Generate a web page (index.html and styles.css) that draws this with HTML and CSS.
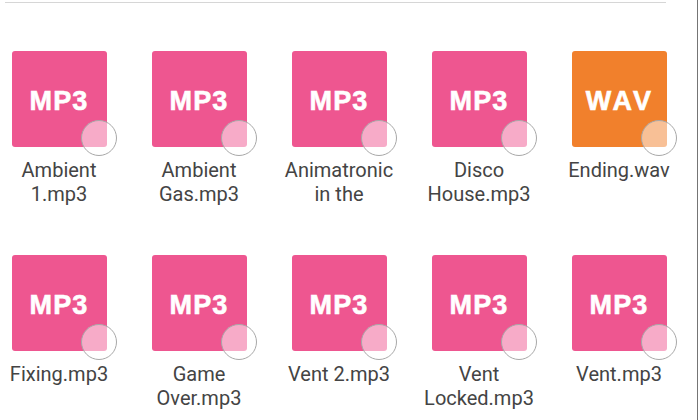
FILE: index.html
```html
<!DOCTYPE html>
<html>
<head>
  <meta charset="UTF-8">
  <title>Files</title>
  <link rel="stylesheet" href="styles.css">
</head>
<body>
  <div class="top-line"></div>
  <div class="file-grid">
    <div class="file"><div class="tile mp3">MP3<span class="check"></span></div><div class="name">Ambient 1.mp3</div></div>
    <div class="file"><div class="tile mp3">MP3<span class="check"></span></div><div class="name">Ambient Gas.mp3</div></div>
    <div class="file"><div class="tile mp3">MP3<span class="check"></span></div><div class="name">Animatronic in the</div></div>
    <div class="file"><div class="tile mp3">MP3<span class="check"></span></div><div class="name">Disco House.mp3</div></div>
    <div class="file"><div class="tile wav">WAV<span class="check"></span></div><div class="name">Ending.wav</div></div>
    <div class="file"><div class="tile mp3">MP3<span class="check"></span></div><div class="name">Fixing.mp3</div></div>
    <div class="file"><div class="tile mp3">MP3<span class="check"></span></div><div class="name">Game Over.mp3</div></div>
    <div class="file"><div class="tile mp3">MP3<span class="check"></span></div><div class="name">Vent 2.mp3</div></div>
    <div class="file"><div class="tile mp3">MP3<span class="check"></span></div><div class="name">Vent Locked.mp3</div></div>
    <div class="file"><div class="tile mp3">MP3<span class="check"></span></div><div class="name">Vent.mp3</div></div>
  </div>
</body>
</html>
```

FILE: styles.css
```css
body {
  margin: 0 1px 0 0;
  height: 420px;
  overflow: hidden;
  background: #fff;
  box-sizing: border-box;
  border-right: 1px solid #757575;
  font-family: Roboto, sans-serif;
}
.top-line {
  height: 1px;
  margin: 2px 31px 0 5px;
  background: #d6d6d6;
}
/* Five columns, tiles are centred in each */
.file-grid {
  display: grid;
  grid-template-columns: repeat(5, 119px);
  column-gap: 21px;
  row-gap: 49px;
  padding-top: 48px;
}
.file {
  display: flex;
  flex-direction: column;
  align-items: center;
}
.tile {
  position: relative;
  width: 95.5px;
  height: 96px;
  box-sizing: border-box;
  padding-top: 4px;
  padding-right: 1px;
  display: flex;
  align-items: center;
  justify-content: center;
  border-radius: 3px;
  color: #fff;
  font-family: "Liberation Sans", sans-serif;
  font-size: 27px;
  font-weight: bold;
  letter-spacing: 1.2px;
  font-kerning: none;
  -webkit-text-stroke: 0.6px #fff;
}
.mp3 {
  background: #ee5690;
}
.wav {
  background: #f1802c;
}
/* Selection circle hanging off the tile corner */
.check {
  position: absolute;
  left: 69px;
  top: 69px;
  width: 36px;
  height: 36px;
  box-sizing: border-box;
  border: 1px solid #a8a8a8;
  border-radius: 50%;
  background: rgba(255, 255, 255, 0.5);
}
.name {
  width: 119px;
  height: 48px;
  box-sizing: border-box;
  padding-right: 1px;
  margin-top: 11px;
  overflow: hidden;
  text-align: center;
  font-size: 20px;
  line-height: 24px;
  color: #444;
}
```
